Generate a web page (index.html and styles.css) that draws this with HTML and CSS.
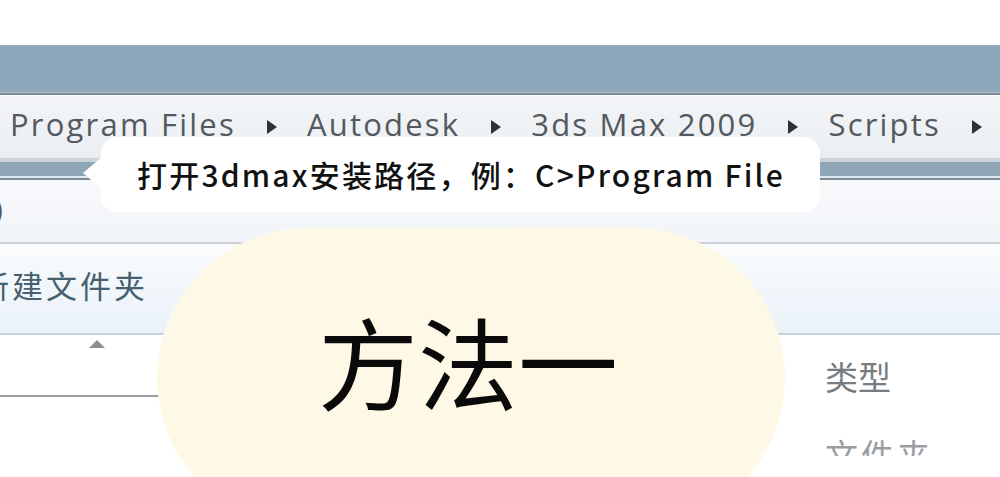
FILE: index.html
```html
<!DOCTYPE html>
<html lang="zh-CN">
<head>
<meta charset="utf-8">
<title>方法一</title>
<link rel="stylesheet" href="styles.css">
</head>
<body>
<div class="screen">
  <div class="top-space"></div>
  <div class="titlebar"></div>
  <div class="crumbs">
    <span class="crumb first">Program Files</span>
    <span class="arrow"></span>
    <span class="crumb">Autodesk</span>
    <span class="arrow"></span>
    <span class="crumb">3ds Max 2009</span>
    <span class="arrow"></span>
    <span class="crumb">Scripts</span>
    <span class="arrow"></span>
  </div>
  <div class="bar2"></div>
  <div class="row-paren"><span class="paren">)</span></div>
  <div class="toolbar"><span class="newfolder">新建文件夹</span></div>
  <div class="list">
    <div class="col-name"><span class="sort"></span></div>
    <div class="col-gap"></div>
    <div class="col-type">
      <div class="type-head">类型</div>
      <div class="type-cell"><span>文件夹</span></div>
    </div>
  </div>

  <div class="bubble">
    <svg class="tail" width="20" height="36" viewBox="0 0 20 36"><polygon points="0,17 20,0 20,34" fill="#ffffff"/></svg>
    <span class="bubble-text">打开3dmax安装路径，例：C&gt;Program File</span>
  </div>

  <div class="blob"><span class="blob-text">方法一</span></div>
</div>
</body>
</html>
```
FILE: styles.css
```css
html, body {
  margin: 0;
  padding: 0;
  background: #ffffff;
}
.screen {
  position: relative;
  width: 1000px;
  height: 477px;
  overflow: hidden;
  background: #ffffff;
  display: flex;
  flex-direction: column;
}
.top-space {
  height: 45px;
  flex: none;
}
.titlebar {
  height: 46px;
  flex: none;
  background: #8ea7ba;
  border-top: 1px solid #9fb0bd;
  border-bottom: 1px solid #b2c0cb;
  box-shadow: 0 2px 0 #76889a;
  margin-bottom: 3px;
}
.crumbs {
  height: 62px;
  flex: none;
  background: linear-gradient(#f3f5f8, #eaeef2);
  display: flex;
  align-items: center;
  font-family: "Open Sans", "Liberation Sans", sans-serif;
  font-size: 31px;
  color: #53595e;
  white-space: nowrap;
  padding-left: 10px;
  letter-spacing: 2.2px;
}
.crumb {
  line-height: 1;
  padding-bottom: 6px;
}
.arrow {
  width: 0;
  height: 0;
  border-top: 7px solid transparent;
  border-bottom: 7px solid transparent;
  border-left: 10px solid #2e3236;
  margin: 0 30px 0 31px;
}
.bar2 {
  height: 14px;
  flex: none;
  background: #8fa6b6;
  border-top: 4px solid #cbd4db;
  border-bottom: 2px solid #e3e8ec;
  box-shadow: 0 2px 0 #7a8c9a;
  margin-bottom: 2px;
}
.row-paren {
  height: 62px;
  flex: none;
  background: linear-gradient(#f8f9fb, #f1f4f8);
  border-bottom: 2px solid #cdd2d8;
  font-family: "Open Sans", "Liberation Sans", sans-serif;
  font-size: 30px;
  color: #555;
  display: flex;
  align-items: center;
}
.paren {
  margin-left: -6px;
  margin-top: -6px;
}
.toolbar {
  height: 89px;
  flex: none;
  background: linear-gradient(#fbfcfd 0%, #f3f7fb 40%, #e9f2f9 100%);
  border-bottom: 2px solid #c9d0d6;
  display: flex;
  align-items: center;
  font-family: "Noto Sans CJK SC", sans-serif;
  font-size: 31px;
  color: #46606f;
  letter-spacing: 3px;
}
.newfolder {
  margin-left: -22px;
  margin-top: -8px;
}
.list {
  flex: 1;
  display: grid;
  grid-template-columns: 160px 665px 1fr;
}
.col-name {
  height: 60px;
  border-bottom: 2px solid #9a9ea3;
  position: relative;
}
.sort {
  display: block;
  width: 0;
  height: 0;
  margin: 5px 0 0 89px;
  border-left: 8px solid transparent;
  border-right: 8px solid transparent;
  border-bottom: 8px solid #8a8f94;
}
.col-type {
  display: flex;
  flex-direction: column;
  font-family: "Noto Sans CJK SC", sans-serif;
  color: #777c80;
}
.type-head {
  font-size: 33px;
  line-height: 1;
  margin-top: 25px;
}
.type-cell {
  margin-top: 45px;
  height: 18px;
  overflow: hidden;
  font-size: 33px;
  line-height: 1;
  color: #9a9ea2;
  letter-spacing: 3px;
}
.bubble {
  position: absolute;
  left: 101px;
  top: 137px;
  width: 719px;
  height: 75px;
  background: #ffffff;
  border-radius: 16px;
  display: flex;
  align-items: center;
}
.tail {
  position: absolute;
  left: -18px;
  top: 19px;
}
.bubble-text {
  margin-left: 36px;
  font-family: "Noto Sans CJK SC", sans-serif;
  font-weight: 500;
  font-size: 30px;
  letter-spacing: 2.2px;
  color: #111;
  white-space: nowrap;
  margin-top: -2px;
}
.blob {
  position: absolute;
  left: 157px;
  top: 228px;
  width: 628px;
  height: 300px;
  border-radius: 150px;
  background: #fef8e6;
  display: flex;
  justify-content: center;
}
.blob-text {
  font-family: "Noto Sans CJK SC", sans-serif;
  font-size: 100px;
  line-height: 1;
  color: #0a0a0a;
  margin-top: 82px;
  margin-left: -6px;
}
```
